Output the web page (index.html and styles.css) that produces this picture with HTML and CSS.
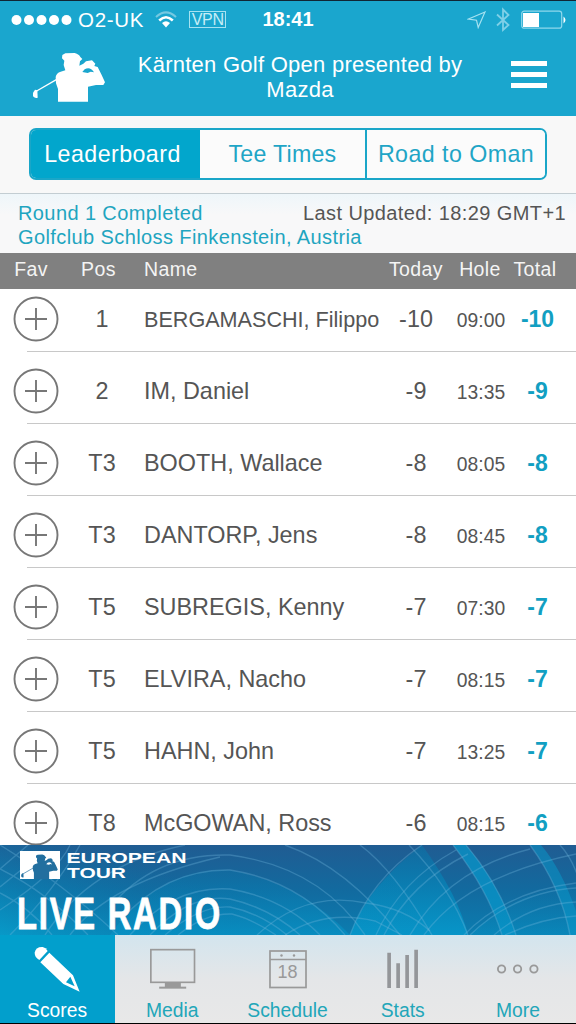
FILE: index.html
```html
<!DOCTYPE html>
<html lang="en">
<head>
<meta charset="utf-8">
<title>Leaderboard</title>
<link rel="stylesheet" href="styles.css">
</head>
<body>
<svg width="0" height="0" class="defs">
  <symbol id="plus" viewBox="0 0 46 46"><g fill="none" stroke="#777" stroke-width="1.9"><circle cx="23" cy="23" r="21.5"/><path d="M12 23H34M23 12V34"/></g></symbol>
  <symbol id="golfer" viewBox="0 0 300 195">
    <path fill="currentColor" fill-rule="evenodd" d="M126 40L127 30L136 25L164 24Q178 28 181 36L187 42L180 49L178 62L190 56L198 49L216 46L226 56L223 63L233 66L245 90L255 112L250 120L228 120L204 125V170H114V132L108 115L107 96Q109 84 122 80L136 76L131 60L133 47ZM187 81L194 73Q210 63 222 82L212 80L203 84Z"/>
    <path d="M109 104L50 138" fill="none" stroke="currentColor" stroke-width="4"/>
    <path fill="currentColor" d="M45 134L52 136L53 158Q46 162 39 154L39 143Z"/>
  </symbol>
</svg>
<div class="screen">
  <header class="header">
    <div class="status">
      <div class="carrier">
        <svg width="62" height="12" viewBox="0 0 62 12" fill="#fff"><circle cx="5.5" cy="6" r="5"/><circle cx="18" cy="6" r="5"/><circle cx="30.5" cy="6" r="5"/><circle cx="43" cy="6" r="5"/><circle cx="55.5" cy="6" r="5"/></svg>
        <span class="operator">O2-UK</span>
        <svg class="wifi" width="22" height="18" viewBox="0 0 22 18" fill="none" stroke="#fff"><path d="M1 6Q11 -3.2 21 6" stroke-width="2" opacity=".4"/><path d="M4.2 9.5Q11 3 17.8 9.5" stroke-width="2.6"/><path d="M7 12Q11 8.5 15 12L11 16.5Z" fill="#fff" stroke="none"/></svg>
        <span class="vpn">VPN</span>
      </div>
      <div class="clock">18:41</div>
      <div class="indicators">
        <svg width="20" height="19" viewBox="0 0 20 19" fill="none" stroke="#a5e2f1" stroke-width="1.2"><path d="M18 2L1.5 9L9.5 10.2L11.2 17.5Z"/></svg>
        <svg class="bluetooth" width="16" height="26" viewBox="0 0 16 26" fill="none" stroke="#7fd0e7" stroke-width="1.8"><path d="M2 7.5L13.5 18L8 23V2.5L13.5 8L2 18.5"/></svg>
        <svg class="battery" width="46" height="20" viewBox="0 0 46 20"><rect x=".7" y="1.2" width="40" height="17" rx="2.5" fill="none" stroke="#8fd8ec" stroke-width="1.2"/><rect x="2" y="3" width="16" height="14" fill="#fff"/><path d="M42.5 6.5Q46.5 10 42.5 13.5Z" fill="#fff"/></svg>
      </div>
    </div>
    <div class="titlebar">
      <svg class="logo" width="100" height="65"><use href="#golfer"/></svg>
      <h1 class="title">Kärnten Golf Open presented by<br>Mazda</h1>
      <div class="menu"><i></i><i></i><i></i></div>
    </div>
  </header>
  <nav class="segments">
    <div class="segmented">
      <span class="segment active">Leaderboard</span>
      <span class="segment tee">Tee Times</span>
      <span class="segment road">Road to Oman</span>
    </div>
  </nav>
  <section class="info">
    <div class="round">Round 1 Completed<br>Golfclub Schloss Finkenstein, Austria</div>
    <div class="updated">Last Updated: 18:29 GMT+1</div>
  </section>
  <div class="columns"><span class="fav">Fav</span><span class="pos">Pos</span><span class="name">Name</span><span>Today</span><span class="hole-head">Hole</span><span class="total-head">Total</span></div>
  <main class="list">
    <ul class="rows">
      <li class="row"><svg class="add"><use href="#plus"/></svg><span>1</span><span class="name long">BERGAMASCHI, Filippo</span><span>-10</span><span class="hole">09:00</span><b>-10</b></li>
      <li class="row"><svg class="add"><use href="#plus"/></svg><span>2</span><span class="name">IM, Daniel</span><span>-9</span><span class="hole">13:35</span><b>-9</b></li>
      <li class="row"><svg class="add"><use href="#plus"/></svg><span>T3</span><span class="name">BOOTH, Wallace</span><span>-8</span><span class="hole">08:05</span><b>-8</b></li>
      <li class="row"><svg class="add"><use href="#plus"/></svg><span>T3</span><span class="name">DANTORP, Jens</span><span>-8</span><span class="hole">08:45</span><b>-8</b></li>
      <li class="row"><svg class="add"><use href="#plus"/></svg><span>T5</span><span class="name">SUBREGIS, Kenny</span><span>-7</span><span class="hole">07:30</span><b>-7</b></li>
      <li class="row"><svg class="add"><use href="#plus"/></svg><span>T5</span><span class="name">ELVIRA, Nacho</span><span>-7</span><span class="hole">08:15</span><b>-7</b></li>
      <li class="row"><svg class="add"><use href="#plus"/></svg><span>T5</span><span class="name">HAHN, John</span><span>-7</span><span class="hole">13:25</span><b>-7</b></li>
      <li class="row"><svg class="add"><use href="#plus"/></svg><span>T8</span><span class="name">McGOWAN, Ross</span><span>-6</span><span class="hole">08:15</span><b>-6</b></li>
    </ul>
  </main>
  <svg class="banner" width="576" height="90" viewBox="0 0 576 90">
    <defs>
      <linearGradient id="sea" x1="0" y1="0" x2="0" y2="1"><stop offset="0" stop-color="#205c92"/><stop offset=".5" stop-color="#126a9f"/><stop offset="1" stop-color="#0b7db0"/></linearGradient>
      <linearGradient id="glow" x1="0" y1="0" x2="0" y2="1"><stop offset="0" stop-color="#0877ab" stop-opacity=".5"/><stop offset="1" stop-color="#0795c8"/></linearGradient>
      <linearGradient id="left" x1="0" y1="1" x2="1" y2="0"><stop offset="0" stop-color="#07a0ce"/><stop offset=".7" stop-color="#0877ab" stop-opacity="0"/></linearGradient>
    </defs>
    <rect width="576" height="90" fill="url(#sea)"/>
    <rect width="240" height="90" fill="url(#left)" opacity=".8"/>
    <path d="M110 90Q160 22 230 25Q300 38 350 90Z" fill="url(#glow)" opacity=".65"/>
    <path d="M350 90Q367 42 422 0Q458 50 468 90Z" fill="url(#glow)"/>
    <path d="M364 0Q402 32 433 90H350Q362 52 392 28Z" fill="url(#glow)" opacity=".25"/>
    <path d="M453 0Q488 45 502 90H516Q500 40 466 0Z" fill="#0799cc" opacity=".7"/>
    <path d="M470 90Q515 45 576 40V90Z" fill="url(#glow)" opacity=".4"/>
    <path d="M530 0Q561 42 570 90H576V66Q561 23 541 0Z" fill="#0799cc" opacity=".5"/>
    <g fill="none" stroke="#6fb5db" stroke-opacity=".34" stroke-width="1.4">
      <path d="M285 0Q347 22 400 90M360 0Q394 25 432 90M409 0Q450 42 468 90M453 0Q488 45 502 90M466 0Q500 40 516 90M530 0Q561 42 570 90M560 0Q573 14 580 38"/>
      <path d="M350 90Q370 35 422 0M376 90Q400 36 456 5M384 90Q410 38 468 9M410 90Q448 25 530 4M424 90Q465 32 576 9M464 90Q505 47 576 38M470 90Q515 47 576 43M494 90Q530 59 576 57M505 90Q542 73 576 71"/>
      <path d="M110 62Q155 8 230 10Q320 22 365 90M120 76Q165 24 230 25Q300 36 345 90M130 90Q174 40 230 44Q284 53 320 90M150 90Q190 48 230 54Q270 63 300 90M165 90Q200 60 230 62Q260 68 287 90M178 90Q205 68 232 69Q252 74 276 90"/>
      <path d="M257 90Q305 45 366 58Q405 63 430 86M285 90Q325 64 375 76L402 90M0 24L28 0M0 42L42 8M0 65Q58 27 70 0M10 90Q55 45 80 0M0 0Q62 38 118 90M0 24Q48 48 88 90M0 48Q30 63 52 90M45 90Q90 20 185 0M70 90Q108 38 220 12"/>
    </g>
    <rect x="20" y="6" width="40" height="28" fill="#fff"/>
    <svg x="14.5" y="5.5" width="51" height="33" class="badge-golfer"><use href="#golfer"/></svg>
    <g fill="#fff" font-family="Liberation Sans, sans-serif" font-weight="bold">
      <text x="66.5" y="17.5" font-size="15.5" textLength="120" lengthAdjust="spacingAndGlyphs">EUROPEAN</text>
      <text x="67" y="33.2" font-size="15.5" textLength="59" lengthAdjust="spacingAndGlyphs">TOUR</text>
      <text x="17" y="84.3" font-size="44" letter-spacing="2.4" textLength="205" lengthAdjust="spacingAndGlyphs" stroke="#fff" stroke-width=".8">LIVE RADIO</text>
    </g>
  </svg>
  <nav class="tabbar">
    <div class="tab current">
      <svg width="60" height="60"><g transform="translate(-28,-5) scale(.3333)" fill="#fff"><path d="M118 90Q104 82 104 68Q107 50 128 51Q138 53 143 63Z"/><path fill-rule="evenodd" d="M121 97L148 68L219 136L239 185L190 162ZM198 157L224 169L211 140Z"/></g></svg>
      <span>Scores</span>
    </div>
    <div class="tab">
      <svg width="60" height="60"><g transform="translate(-142.8,-5) scale(.3333)" fill="none" stroke="#999" stroke-width="5"><rect x="452" y="59" width="131" height="98"/><path d="M477 173H558" stroke-width="6"/><path d="M494 165H542" stroke-width="13"/></g></svg>
      <span>Media</span>
    </div>
    <div class="tab">
      <svg width="60" height="60"><rect x="12" y="16" width="36" height="36.5" fill="none" stroke="#999" stroke-width="1.7"/><path d="M12 24.5H48" stroke="#999" stroke-width="1.3"/><circle cx="23.5" cy="20.5" r="1.2" fill="#999"/><circle cx="36" cy="20.5" r="1.2" fill="#999"/><text x="29.5" y="43.2" text-anchor="middle" class="date">18</text></svg>
      <span>Schedule</span>
    </div>
    <div class="tab">
      <svg width="60" height="60"><g transform="translate(-85.2,-5) scale(.3333)" stroke="#949699" stroke-width="11"><path d="M304 68V174M331 100V174M358 75V174M385 59V174"/></g></svg>
      <span>Stats</span>
    </div>
    <div class="tab">
      <svg width="60" height="60"><g transform="translate(-200.4,-5) scale(.3333)" stroke="#999" stroke-width="5.5" fill="none"><circle cx="642" cy="117" r="11"/><circle cx="690" cy="117" r="11"/><circle cx="739" cy="117" r="11"/></g></svg>
      <span>More</span>
    </div>
  </nav>
</div>
</body>
</html>
```
FILE: styles.css
```css
* { box-sizing: border-box; }
body { margin: 0; font-family: "Liberation Sans", Arial, sans-serif; color: #555; }
svg { display: block; flex: none; }
.defs { position: absolute; }
.screen { width: 576px; height: 1024px; display: flex; flex-direction: column; overflow: hidden; background: #fff; border-bottom: 1px solid #000; }

.header { height: 116px; flex: none; background: #1aa6ce; border-top: 1px solid #102535; color: #fff; display: flex; flex-direction: column; }
.status { height: 37px; flex: none; display: grid; grid-template-columns: 1fr 60px 1fr; align-items: center; padding: 0 9px 0 11px; }
.carrier { display: flex; align-items: center; }
.operator { font-size: 20.5px; letter-spacing: .7px; margin-left: 5px; }
.wifi { margin-left: 11px; }
.vpn { margin-left: 12px; border: 1px solid #a5e2f1; width: 37px; height: 17px; font-size: 16px; line-height: 16px; text-align: center; color: #c5edf6; letter-spacing: -.3px; }
.clock { font-size: 20px; font-weight: bold; text-align: center; white-space: nowrap; margin-left: -2px; }
.indicators { display: flex; align-items: center; justify-content: flex-end; }
.bluetooth { margin-left: 8px; }
.battery { margin-left: 10px; }
.titlebar { flex: 1; display: flex; align-items: flex-start; padding-top: 7px; }
.logo { margin-left: 20px; }
.title { margin: 7px 0 0; width: 360px; text-align: center; font-weight: normal; font-size: 22px; line-height: 25px; letter-spacing: .26px; white-space: nowrap; }
.menu { margin: 16px 0 0 31px; width: 36px; display: flex; flex-direction: column; gap: 6px; }
.menu i { height: 5px; background: #fff; }

.segments { height: 78px; flex: none; background: #f8f8f8; border-bottom: 1px solid #c3cdd2; padding: 12px 29px 0; }
.segmented { height: 52px; display: flex; border: 2px solid #1aa6c8; border-radius: 7px; overflow: hidden; }
.segment { display: flex; align-items: center; justify-content: center; font-size: 23.2px; letter-spacing: .45px; color: #1fa5c6; white-space: nowrap; background: #fbfbfb; flex: 1; padding-top: 1px; }
.segment.active { flex: none; width: 169px; padding-right: 6px; background: #02a6cc; color: #fff; }
.segment.tee { flex: none; width: 167px; border-right: 2px solid #1aa6c8; letter-spacing: .25px; }

.info { height: 59px; flex: none; display: flex; justify-content: space-between; padding: 7px 10px 0 18px; font-size: 20px; line-height: 24px; letter-spacing: .4px; white-space: nowrap; background: linear-gradient(#eef6fa, #f8f8f9 35%); }
.round { color: #1fa5c0; width: 250px; }
.columns, .row { display: grid; grid-template-columns: 72px 60px 252px 64px 66px 47px; align-items: center; text-align: center; }
.columns { height: 36px; flex: none; background: #808080; color: #f4f4f4; font-size: 19.5px; letter-spacing: .4px; padding-bottom: 4px; }
.columns .fav { padding-right: 10px; }
.columns .pos { padding-right: 7px; }
.columns .hole-head { padding-right: 2px; }
.columns .total-head { margin-left: -5px; }
.columns .name, .row .name { text-align: left; padding-left: 12px; white-space: nowrap; }

.list { height: 556px; flex: none; overflow: hidden; }
.rows { list-style: none; margin: -9px 0 0; padding: 0; }
.row { height: 72px; padding-top: 7px; font-size: 23.4px; background: linear-gradient(#c8c8c8, #c8c8c8) 27px 71px no-repeat; background-size: 549px 1px; }
.row .add { width: 46px; height: 46px; margin: -1px 0 0 13px; }
.row .long { font-size: 21.6px; }
.row .hole { font-size: 19.3px; padding-top: 2px; }
.row b { color: #129fc2; font-size: 23px; }

.banner { flex: none; }
.badge-golfer { color: #226f9f; }
.tabbar { height: 88px; flex: none; display: grid; grid-template-columns: repeat(5, 1fr); background: linear-gradient(#d3e5ee, #e4e6e8 50%, #e8e8e8); }
.tab { display: flex; flex-direction: column; align-items: center; color: #22a6b9; font-size: 19.3px; }
.tab span { line-height: 22px; margin-top: 5px; margin-right: 1px; }
.tab.current { background: #029fcc; color: #fff; }
.date { font-size: 18px; fill: #999; }
```
